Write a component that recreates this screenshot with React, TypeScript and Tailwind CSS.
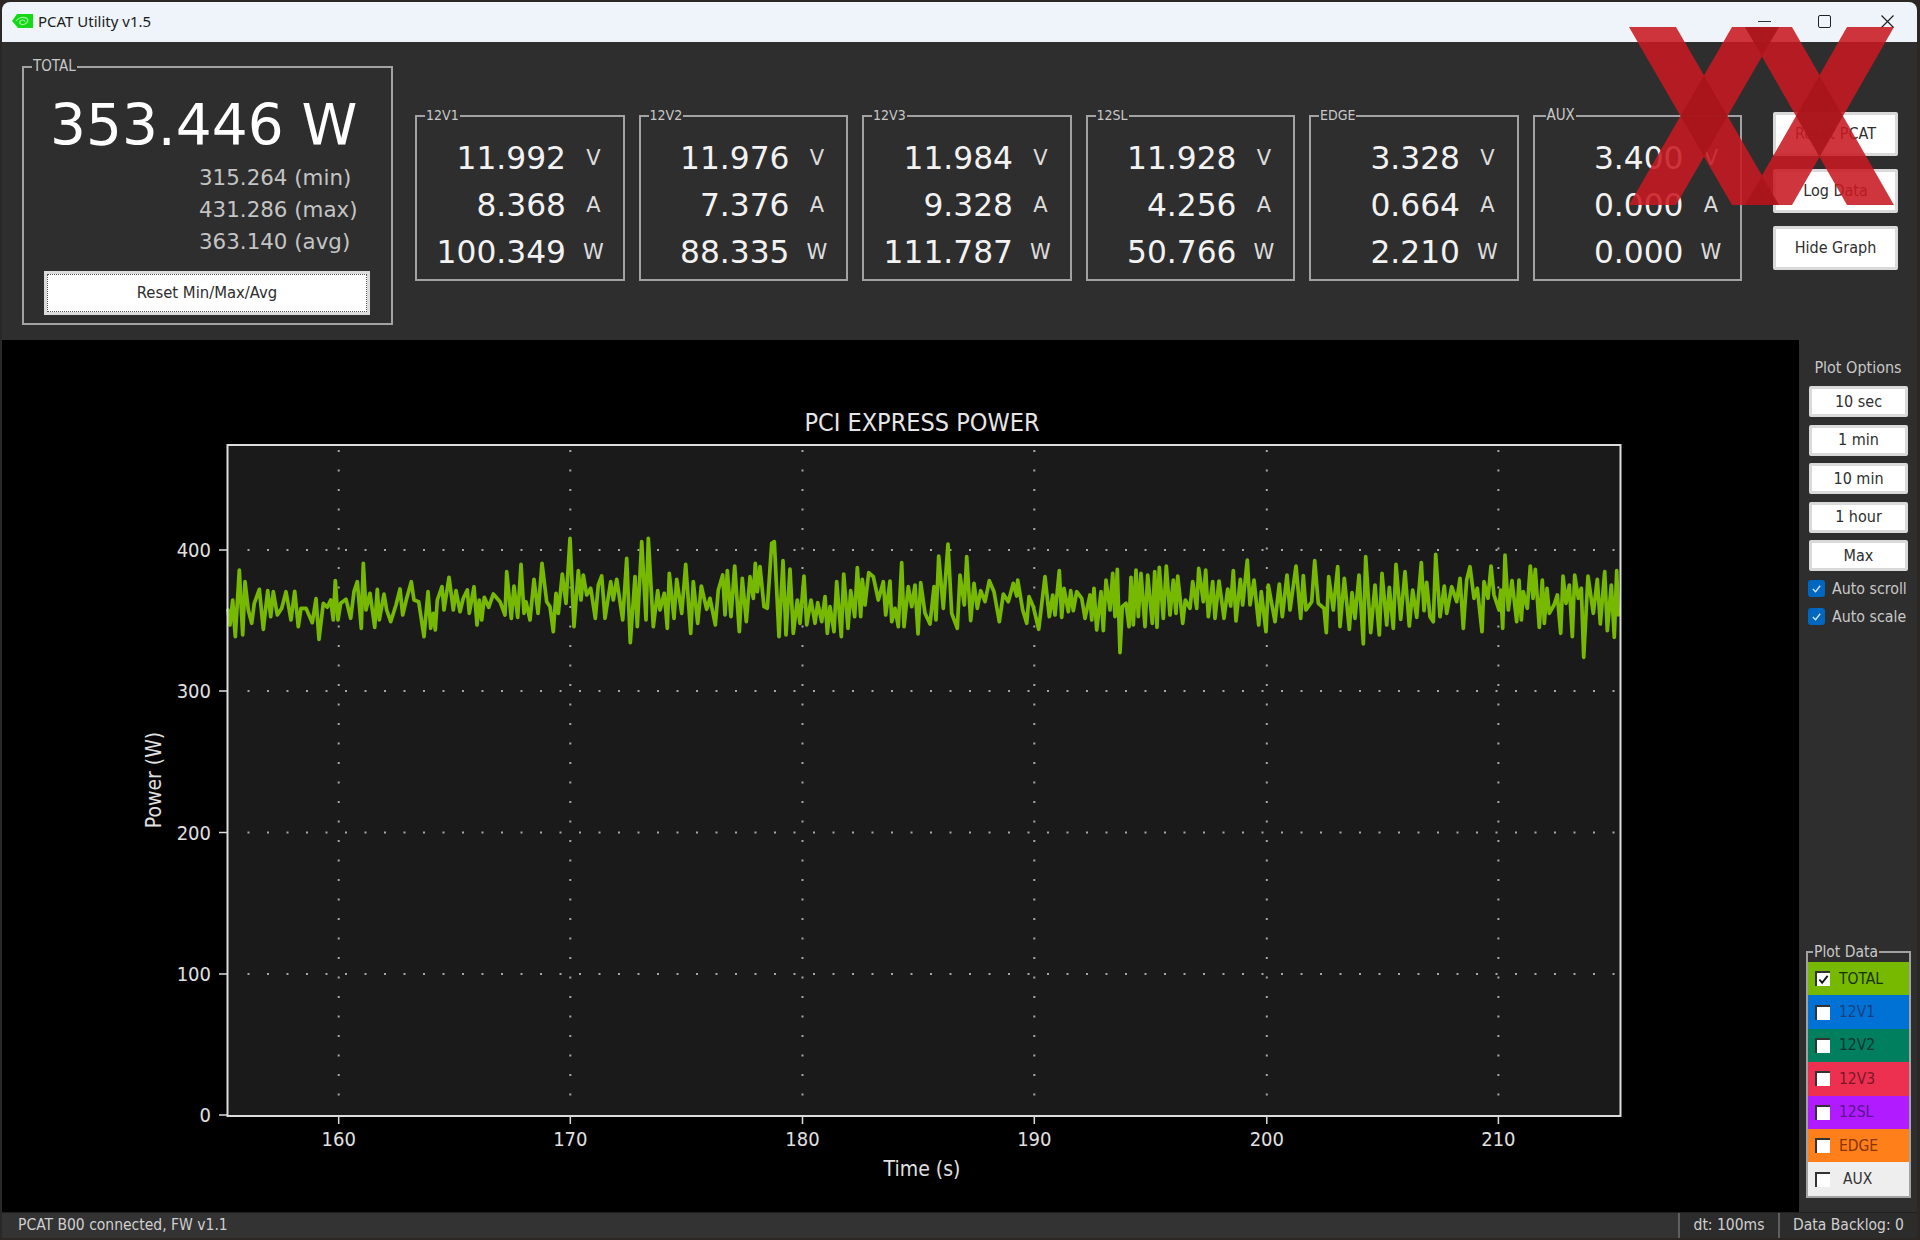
import React from 'react';

// signal traced from the reference: [crop origin x, [zoomed x, zoomed y]...]
const traces: [number, number[]][] = [
  [220, [24,270,30,315,38,240,46,350,58,150,68,345,75,185,85,270,95,310,103,250,118,208,130,328,143,212,152,290,160,215,172,285,185,265,198,215,213,300,224,214,235,320,243,265,258,265,277,308,288,236,297,358,310,250,322,262,332,240,340,300,346,182,354,300,362,250,378,238,392,295,402,215,412,185,424,325,430,130,438,270,450,220,464,322,472,208,478,300,492,222,500,270,512,305,528,255,540,207,548,285,560,235,574,185,582,240,596,245,612,350,624,215,632,325,640,280,646,330,652,240,666,200,672,270,687,172,700,270,708,212,720,275,730,235,742,210,748,280,762,200,771,315,778,240,785,300,793,232,806,262,820,222,840,245,855,285,860,155,874,295,882,198,893,292,903,133,912,280,918,245,930,300,942,178,954,280,966,130,980,245,990,260,1000,335,1008,220,1015,280,1027,162,1038,250,1050,55,1062,320,1075,152,1083,240,1090,165,1100,225,1112,205,1126,295,1135,195,1145,168,1155,295,1172,185,1180,240,1190,178,1208,300,1220,115,1231,368]],
  [630, [15,170,22,320,35,65,48,300,55,55,70,320,83,212,90,270,103,220,112,325,118,160,132,295,140,178,155,280,167,133,182,340,190,185,203,310,214,198,230,268,240,235,256,315,265,210,278,165,285,285,292,152,303,290,314,138,328,335,337,175,349,305,360,170,370,235,376,130,382,215,390,140,402,260,412,265,425,70,433,65,447,350,459,122,468,345,480,147,490,340,502,240,510,310,522,168,530,315,543,240,555,310,563,248,575,305,585,230,592,340,600,260,612,335,620,185,634,350,641,162,654,325,662,212,674,290,682,143,692,290,697,178,705,255,716,158,730,170,745,240,760,185,767,285,780,183,785,305,795,265,805,320,815,128,822,320,835,200,845,260,855,195,864,342,872,188,885,280,900,312,912,200,918,300,926,108,940,265,954,72,965,280,982,325,990,165,1003,255,1010,110,1022,302,1032,190,1042,265,1052,212,1065,245,1078,182,1092,215,1108,305,1120,222,1135,245,1150,190,1160,228,1163,180,1178,270,1190,310,1197,230,1210,260,1226,328]],
  [1040, [15,170,28,290,38,225,45,285,58,152,65,292,72,205,85,275,92,212,100,272,110,215,125,235,135,295,150,225,155,300,162,205,170,330,183,215,190,332,198,180,210,270,218,160,225,290,232,148,240,398,247,260,258,250,267,320,273,172,280,315,288,150,295,290,303,160,315,320,323,165,337,310,344,155,351,322,358,142,370,295,379,138,390,285,400,180,408,280,413,168,428,310,436,240,450,265,458,185,470,265,476,145,490,245,497,150,505,290,518,185,525,295,537,183,552,295,563,207,572,258,580,152,588,303,601,178,608,255,622,120,630,255,642,180,656,315,664,215,678,335,685,195,705,305,718,192,727,290,741,165,750,270,768,138,782,295,790,167,798,270,815,245,824,122,835,250,852,265,859,338,866,170,880,270,893,140,900,320,913,175,928,328,936,218,945,295,957,165,970,372,977,110,992,338,1005,195,1018,345,1026,160,1040,315,1048,202,1060,325,1068,133,1082,298,1095,155,1108,318,1118,210,1130,292,1144,128,1152,272,1160,187,1170,290,1180,305,1187,103,1200,290,1213,198,1220,280,1235,200,1250,245]],
  [1400, [180,175,190,325,200,180,210,140,222,235,232,205,246,335,252,185,264,235,273,138,282,225,297,270,302,210,308,325,315,105,325,270,336,182,350,305,357,180,364,300,370,215,382,265,391,138,399,235,406,148,418,322,427,180,433,310,441,205,448,280,462,255,472,225,482,340,489,168,498,250,508,195,517,350,524,165,535,235,544,205,551,412,564,168,580,280,592,178,601,312,614,155,622,332,634,195,643,352,650,152,655,285]],
];

const signalPoints = traces
  .map(([x0, pts]) => {
    const out: string[] = [];
    for (let i = 0; i < pts.length; i += 2) {
      out.push(`${(x0 + pts[i] / 3).toFixed(1)},${(520 + pts[i + 1] / 3).toFixed(1)}`);
    }
    return out.join(' ');
  })
  .join(' ');

const rails = [
  { name: '12V1', v: '11.992', a: '8.368', w: '100.349' },
  { name: '12V2', v: '11.976', a: '7.376', w: '88.335' },
  { name: '12V3', v: '11.984', a: '9.328', w: '111.787' },
  { name: '12SL', v: '11.928', a: '4.256', w: '50.766' },
  { name: 'EDGE', v: '3.328', a: '0.664', w: '2.210' },
  { name: 'AUX', v: '3.400', a: '0.000', w: '0.000' },
];

const plotRows = [
  { name: 'TOTAL', bg: 'bg-[#76b900]', text: 'text-[#173000]', checked: true },
  { name: '12V1', bg: 'bg-[#0072d6]', text: 'text-[#1c3f7c]' },
  { name: '12V2', bg: 'bg-[#007f5f]', text: 'text-[#07332a]' },
  { name: '12V3', bg: 'bg-[#ee3050]', text: 'text-[#7a1828]' },
  { name: '12SL', bg: 'bg-[#b01cff]', text: 'text-[#5a1590]' },
  { name: 'EDGE', bg: 'bg-[#ff7f1a]', text: 'text-[#8a3208]' },
  { name: 'AUX', bg: 'bg-[#eeeeee]', text: 'text-[#333333]', pad: 'ml-[13px]' },
];

const xTicks = [
  { label: '160', x: 338.7 },
  { label: '170', x: 570.3 },
  { label: '180', x: 802.5 },
  { label: '190', x: 1034.3 },
  { label: '200', x: 1266.8 },
  { label: '210', x: 1498.4 },
];
const yTicks = [
  { label: '400', y: 550 },
  { label: '300', y: 691 },
  { label: '200', y: 832.5 },
  { label: '100', y: 974 },
  { label: '0', y: 1115 },
];

const Group = ({ label, className, labelClass = 'left-[8px] text-[15px]', children }: { label: string; className: string; labelClass?: string; children: React.ReactNode }) => (
  <div className={`relative box-border border-2 border-[#a2a2a2] ${className}`}>
    <span className={`absolute -top-[11px] bg-[#2e2e2e] px-[1px] font-['DejaVu_Sans_Condensed','DejaVu_Sans',sans-serif] leading-[18px] text-[#c8c8c8] ${labelClass}`}>
      {label}
    </span>
    {children}
  </div>
);

const Button = ({ label, className }: { label: string; className: string }) => (
  <div className={`box-border flex items-center justify-center rounded-[2px] border-[3px] border-[#d9d9d9] bg-white text-[16px] text-[#2e2e2e] ${className}`}>
    {label}
  </div>
);

const BlueCheck = ({ label }: { label: string }) => (
  <div className="flex h-[28px] items-center pl-[9px]">
    <span className="flex h-[17px] w-[17px] items-center justify-center rounded-[3px] bg-[#0067c0]">
      <svg width="11" height="11" viewBox="0 0 12 12" fill="none" stroke="#cfe4f7" strokeWidth="1.5">
        <path d="M2 6.5 L5 9.5 L10 3" />
      </svg>
    </span>
    <span className="ml-[7px] whitespace-nowrap text-[15.8px] text-[#c8c8c8]">{label}</span>
  </div>
);

const Chart = () => (
  <svg className="block h-[872px] w-[1797px]" viewBox="2 340 1797 872">
    <rect x="227.5" y="445" width="1393" height="671" fill="#1a1a1a" />
    {yTicks.slice(0, 4).map((t) => (
      <line key={t.y} x1="247.5" x2="1619" y1={t.y} y2={t.y} stroke="#a6a6a6" strokeWidth="2" strokeDasharray="2 17.5" />
    ))}
    {xTicks.map((t) => (
      <line key={t.x} x1={t.x} x2={t.x} y1="1095.5" y2="445" stroke="#a6a6a6" strokeWidth="2" strokeDasharray="2 17.5" />
    ))}
    <polyline points={signalPoints} fill="none" stroke="#76b900" strokeWidth="3.7" strokeLinejoin="round" strokeLinecap="round" />
    <rect x="227.5" y="445" width="1393" height="671" fill="none" stroke="#dcdcdc" strokeWidth="2" />
    {xTicks.map((t) => (
      <g key={t.label}>
        <line x1={t.x} x2={t.x} y1="1115" y2="1124" stroke="#dcdcdc" strokeWidth="1.5" />
        <text x={t.x} y="1146" textAnchor="middle" fill="#e0e0e0" fontSize="20">{t.label}</text>
      </g>
    ))}
    {yTicks.map((t) => (
      <g key={t.label}>
        <line x1="219" x2="228" y1={t.y} y2={t.y} stroke="#dcdcdc" strokeWidth="1.5" />
        <text x="211" y={t.y + 7} textAnchor="end" fill="#e0e0e0" fontSize="20">{t.label}</text>
      </g>
    ))}
    <text x="922" y="431" textAnchor="middle" fill="#e6e6e6" fontSize="25">PCI EXPRESS POWER</text>
    <text x="922" y="1176" textAnchor="middle" fill="#e0e0e0" fontSize="21">Time (s)</text>
    <text transform="translate(161 780) rotate(-90)" textAnchor="middle" fill="#e0e0e0" fontSize="21">Power (W)</text>
  </svg>
);

export default function App() {
  return (
    <div className="relative h-[1240px] w-[1920px] overflow-hidden bg-[#2b2724] pl-[2px] pt-[2px] font-['DejaVu_Sans_Condensed','DejaVu_Sans',sans-serif]">
      <div className="flex h-[1236px] w-[1915px] flex-col overflow-hidden rounded-t-lg bg-[#2e2e2e]">
        {/* Title bar */}
        <div className="flex h-[40px] shrink-0 items-center bg-[#eef4f9] pb-[2px] pl-[10px] font-['Noto_Sans',sans-serif]">
          <svg width="21" height="14" viewBox="0 0 21 14">
            <path d="M5 0 H21 V14 H6 L0 7 Z" fill="#16d916" />
            <path d="M4 7 C7 3 12 2.5 15 4.5 C16.5 6 16 9 13 10 C10 11.5 7 10 8 7.5 C9 5.5 12 5.5 13 7.5" fill="none" stroke="#9ff09f" strokeWidth="1.2" />
          </svg>
          <span className="ml-[5px] text-[15px] text-[#1b1b1b]">PCAT Utility v1.5</span>
          <div className="ml-auto flex items-center pr-[23px] text-[#222]">
            <div className="h-[1px] w-[13px] bg-[#333]" />
            <div className="ml-[47px] h-[13px] w-[13px] rounded-[2px] border-[1.5px] border-[#222]" />
            <svg className="ml-[50px]" width="13" height="13" viewBox="0 0 13 13" stroke="#222" strokeWidth="1.2">
              <path d="M0.5 0.5 L12.5 12.5 M12.5 0.5 L0.5 12.5" />
            </svg>
          </div>
        </div>

        {/* Readouts */}
        <div className="flex h-[298px] shrink-0 items-start pl-[20px]">
          <Group label="TOTAL" className="mt-[24px] h-[259px] w-[371px]">
            <div className="ml-[26px] mt-[28px] flex h-[60px] items-center whitespace-pre font-['DejaVu_Sans',sans-serif] text-[56.5px] leading-none text-white">
              353.446 W
            </div>
            <div className="mt-[6px] pl-[175px] font-['DejaVu_Sans',sans-serif] text-[21.4px] leading-[32px] text-[#c4c4c4]">
              <div className="whitespace-pre">315.264 (min)</div>
              <div className="whitespace-pre">431.286 (max)</div>
              <div className="whitespace-pre">363.140 (avg)</div>
            </div>
            <div className="ml-[20px] mt-[13px] box-border h-[44px] w-[326px] border-[3px] border-[#dcdcdc] bg-white">
              <div className="flex h-full items-center justify-center border border-dotted border-[#555] pt-[1px] text-[16.5px] text-[#2e2e2e]">
                Reset Min/Max/Avg
              </div>
            </div>
          </Group>

          <div className="ml-[22px] mt-[73px] flex gap-[14px]">
            {rails.map((r) => (
              <Group key={r.name} label={r.name} labelClass={r.name === 'AUX' ? 'left-[11px] text-[15px]' : 'left-[8px] text-[14px]'} className="h-[166px] w-[209.5px] pt-[18px] font-['DejaVu_Sans',sans-serif]">
                {[
                  [r.v, 'V'],
                  [r.a, 'A'],
                  [r.w, 'W'],
                ].map(([value, unit]) => (
                  <div key={unit} className="flex h-[47px] items-center">
                    <span className="w-[149px] text-right text-[31.3px] text-[#f2f2f2]">{value}</span>
                    <span className="w-[55px] text-center text-[21px] text-[#dcdcdc]">{unit}</span>
                  </div>
                ))}
              </Group>
            ))}
          </div>

          <div className="ml-[31px] mt-[70px] flex flex-col gap-[13px]">
            <Button label="Reset PCAT" className="h-[44px] w-[125px]" />
            <Button label="Log Data" className="h-[44px] w-[125px]" />
            <Button label="Hide Graph" className="h-[44px] w-[125px]" />
          </div>
        </div>

        {/* Graph and plot controls */}
        <div className="flex h-[872px] shrink-0">
          <div className="w-[1797px] shrink-0 bg-black">
            <Chart />
          </div>
          <div className="flex w-[118px] flex-col">
            <div className="mt-[13px] flex h-[30px] items-center justify-center text-[16px] text-[#c8c8c8]">Plot Options</div>
            <div className="ml-[10px] mt-[3px] flex w-[99px] flex-col gap-[7.6px]">
              {['10 sec', '1 min', '10 min', '1 hour', 'Max'].map((label) => (
                <Button key={label} label={label} className="h-[31px] w-[99px]" />
              ))}
            </div>
            <div className="mt-[3px]">
              <BlueCheck label="Auto scroll" />
              <BlueCheck label="Auto scale" />
            </div>
            <div className="mb-[14px] ml-[7px] mt-auto">
              <Group label="Plot Data" labelClass="left-[5px] top-[-10px] text-[15.5px]" className="h-[247px] w-[105px] pt-[9px]">
                {plotRows.map((row) => (
                  <div key={row.name} className={`flex h-[33.4px] items-center pl-[7px] ${row.bg}`}>
                    <span className="box-border flex h-[15px] w-[15px] shrink-0 items-center justify-center border-l-2 border-t-2 border-[#333] bg-white">
                      {row.checked && (
                        <svg width="11" height="11" viewBox="0 0 12 12" fill="none" stroke="#111" strokeWidth="2">
                          <path d="M1.5 6 L4.5 9.5 L10.5 2" />
                        </svg>
                      )}
                    </span>
                    <span className={`pt-[1px] text-[15.5px] ${row.pad ?? 'ml-[9px]'} ${row.text}`}>{row.name}</span>
                  </div>
                ))}
              </Group>
            </div>
          </div>
        </div>

        {/* Status bar */}
        <div className="flex h-[26px] shrink-0 items-center border-t border-[#202020] bg-[#333333] pl-[16px] text-[15.5px] text-[#cfcfcf]">
          <span className="w-[1660px] whitespace-nowrap pt-[1px]">PCAT B00 connected, FW v1.1</span>
          <span className="flex h-full w-[100px] items-center justify-center border-l-2 border-[#5e5e5e] bg-[#2c2c2c] pt-[1px]">dt: 100ms</span>
          <span className="flex h-full flex-1 items-center justify-center whitespace-nowrap border-l-2 border-[#5e5e5e] bg-[#2c2c2c] pt-[1px]">Data Backlog: 0</span>
        </div>
      </div>

      {/* Watermark logo */}
      <svg className="pointer-events-none absolute left-[1620px] top-[20px]" width="284" height="195" viewBox="1620 20 284 195">
        <g fill="rgb(200,25,33)" fillOpacity="0.88">
          <polygon points="1629,27 1676,27 1779,205 1732,205" />
          <polygon points="1732,27 1779,27 1676,205 1629,205" />
          <polygon points="1745,27 1792,27 1894,205 1847,205" />
          <polygon points="1847,27 1894,27 1792,205 1745,205" />
        </g>
        <g fill="#000000" fillOpacity="0.14">
          <polygon points="1704,75.4 1727.5,116 1704,156.6 1680.5,116" />
          <polygon points="1819.5,75.4 1843,116 1819.5,156.6 1796,116" />
          <polygon points="1745,27 1779,27 1762,56" />
          <polygon points="1745,205 1779,205 1762,176" />
        </g>
      </svg>
    </div>
  );
}
